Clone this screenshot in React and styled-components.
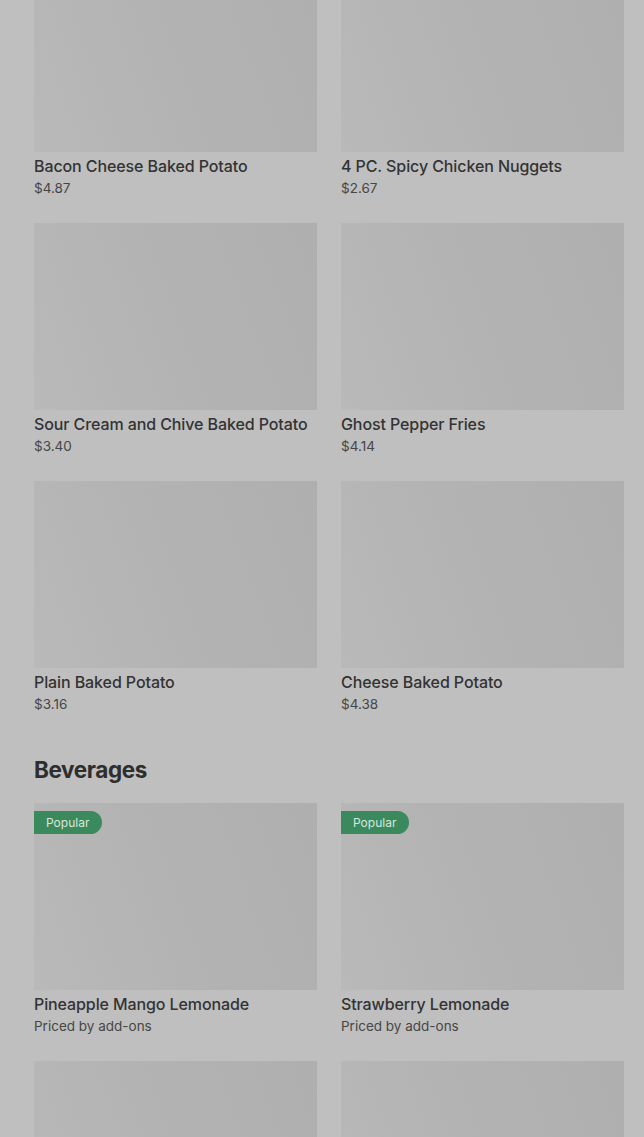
import React from "react";
import styled, { createGlobalStyle } from "styled-components";

const GlobalStyle = createGlobalStyle`
  html, body {
    margin: 0;
    padding: 0;
    background: #bfbfbf;
    font-family: "Inter", "Liberation Sans", sans-serif;
    overflow: hidden;
  }
`;

const sections = [
  {
    title: null,
    items: [
      { name: "Bacon Cheese Baked Potato", price: "$4.87" },
      { name: "4 PC. Spicy Chicken Nuggets", price: "$2.67" },
      { name: "Sour Cream and Chive Baked Potato", price: "$3.40" },
      { name: "Ghost Pepper Fries", price: "$4.14" },
      { name: "Plain Baked Potato", price: "$3.16" },
      { name: "Cheese Baked Potato", price: "$4.38" },
    ],
  },
  {
    title: "Beverages",
    items: [
      { name: "Pineapple Mango Lemonade", price: "Priced by add-ons", popular: true },
      { name: "Strawberry Lemonade", price: "Priced by add-ons", popular: true },
      { name: "", price: "" },
      { name: "", price: "" },
    ],
  },
];

export default function App() {
  return (
    <Page>
      <GlobalStyle />
      {sections.map((section, i) => (
        <Section key={i}>
          {section.title && <Heading>{section.title}</Heading>}
          <Grid>
            {section.items.map((item, j) => (
              <Card key={j}>
                <Thumb>{item.popular && <Badge>Popular</Badge>}</Thumb>
                <Name>{item.name}</Name>
                <Price>{item.price}</Price>
              </Card>
            ))}
          </Grid>
        </Section>
      ))}
    </Page>
  );
}

const Page = styled.div`
  padding: 0 20px 0 34px;
  margin-top: -35px;
  height: 1172px;
  overflow: hidden;
  background: #bfbfbf;
`;

const Section = styled.section`
  & + & {
    margin-top: 39px;
  }
`;

const Heading = styled.h2`
  margin: 0 0 17px;
  font-size: 22.5px;
  line-height: 32px;
  font-weight: 700;
  letter-spacing: -0.4px;
  color: #2e2e2e;
`;

const Grid = styled.div`
  display: grid;
  grid-template-columns: 283px 283px;
  column-gap: 24px;
  row-gap: 24px;
`;

const Card = styled.div`
  display: flex;
  flex-direction: column;
  height: 234px;
`;

const Thumb = styled.div`
  position: relative;
  height: 187px;
  background: linear-gradient(70deg, #b9b9b9 0%, #b3b3b3 45%, #afafaf 100%);
`;

const Badge = styled.span`
  position: absolute;
  top: 8px;
  left: 0;
  height: 23px;
  padding: 0 13px 0 12px;
  display: flex;
  align-items: center;
  background: #3b8a5e;
  color: #d8e6dc;
  font-size: 12px;
  border-radius: 0 12px 12px 0;
`;

const Name = styled.div`
  margin-top: 3px;
  font-size: 16px;
  line-height: 22px;
  font-weight: 500;
  letter-spacing: -0.1px;
  color: #333333;
  white-space: nowrap;
`;

const Price = styled.div`
  margin-top: 1px;
  font-size: 13.5px;
  line-height: 20px;
  color: #464646;
`;
